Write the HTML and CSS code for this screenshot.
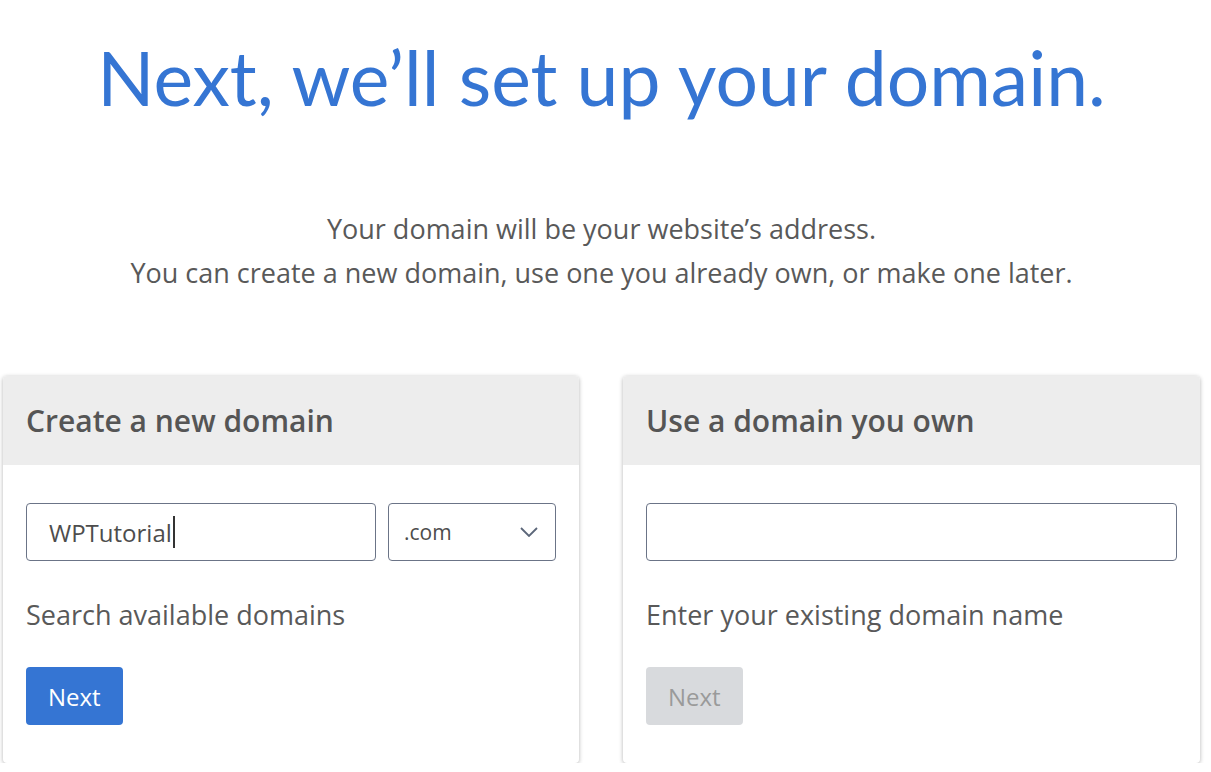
FILE: index.html
```html
<!DOCTYPE html>
<html lang="en">
  <head>
    <meta charset="UTF-8" />
    <meta name="viewport" content="width=device-width, initial-scale=1.0" />
    <title>Set up your domain</title>
    <link rel="stylesheet" href="styles.css">
  </head>
  <body>
    <div class="page">
      <h1 class="title">Next, we’ll set up your domain.</h1>

      <div class="intro">
        <p>Your domain will be your website’s address.</p>
        <p>You can create a new domain, use one you already own, or make one later.</p>
      </div>

      <div class="cards">
        <div class="card">
          <div class="card-header">Create a new domain</div>
          <div class="card-body">
            <div class="field-row">
              <div class="field field-grow">WPTutorial<span class="caret"></span></div>
              <div class="field field-select">
                <span>.com</span>
                <svg class="chevron" width="18" height="10" viewBox="0 0 18 10">
                  <path d="M1 1 L9 9 L17 1" fill="none" stroke="#5b6679" stroke-width="1.8" />
                </svg>
              </div>
            </div>
            <p class="hint">Search available domains</p>
            <button class="btn">Next</button>
          </div>
        </div>

        <div class="card">
          <div class="card-header">Use a domain you own</div>
          <div class="card-body">
            <div class="field-row">
              <div class="field field-grow"></div>
            </div>
            <p class="hint">Enter your existing domain name</p>
            <button class="btn btn-disabled" disabled>Next</button>
          </div>
        </div>
      </div>
    </div>
  </body>
</html>
```

FILE: styles.css
```css
body {
  margin: 0;
  padding: 0;
  background: #fff;
  font-family: "Open Sans", Arial, sans-serif;
  color: #595959;
}

.page {
  width: 1197px;
  margin-left: 3px;
}

.title {
  margin: 0;
  padding-top: 32px;
  text-align: center;
  font-family: Lato, "Open Sans", sans-serif;
  font-weight: 400;
  font-size: 75px;
  line-height: 90px;
  color: #3575d3;
}

.intro {
  margin-top: 85px;
  text-align: center;
  font-size: 27px;
  line-height: 44px;
}

.intro p {
  margin: 0;
}

.cards {
  display: grid;
  grid-template-columns: 576px 577px;
  column-gap: 44px;
  margin-top: 81px;
}

.card {
  background: #fff;
  border-radius: 4px;
  box-shadow: 0 1px 4px rgba(0, 0, 0, 0.3);
  overflow: hidden;
}

.card-header {
  height: 89px;
  background: #ededed;
  padding: 0 23px;
  display: flex;
  align-items: center;
  font-size: 30px;
  font-weight: 600;
  color: #555;
}

.card-body {
  padding: 38px 23px 38px 23px;
}

.field-row {
  display: flex;
  gap: 12px;
}

.field {
  height: 58px;
  box-sizing: border-box;
  border: 1px solid #6b7487;
  border-radius: 4px;
  display: flex;
  align-items: center;
  font-size: 24px;
  color: #4d4d4d;
}

.field-grow {
  flex: 1;
  padding-left: 22px;
}

.field-select {
  width: 168px;
  padding: 0 17px 0 15px;
  justify-content: space-between;
  font-size: 21px;
}

.caret {
  display: inline-block;
  width: 2px;
  height: 32px;
  background: #333;
  margin-left: 1px;
}

.hint {
  margin: 35px 0 33px;
  font-size: 27px;
  line-height: 38px;
}

.btn {
  display: block;
  height: 58px;
  padding: 0 22px;
  border: none;
  border-radius: 4px;
  background: #3575d3;
  color: #fff;
  font-family: "Open Sans", Arial, sans-serif;
  font-size: 24px;
  cursor: pointer;
}

.btn-disabled {
  background: #d8dadd;
  color: #9a9a9a;
  cursor: default;
}
```
